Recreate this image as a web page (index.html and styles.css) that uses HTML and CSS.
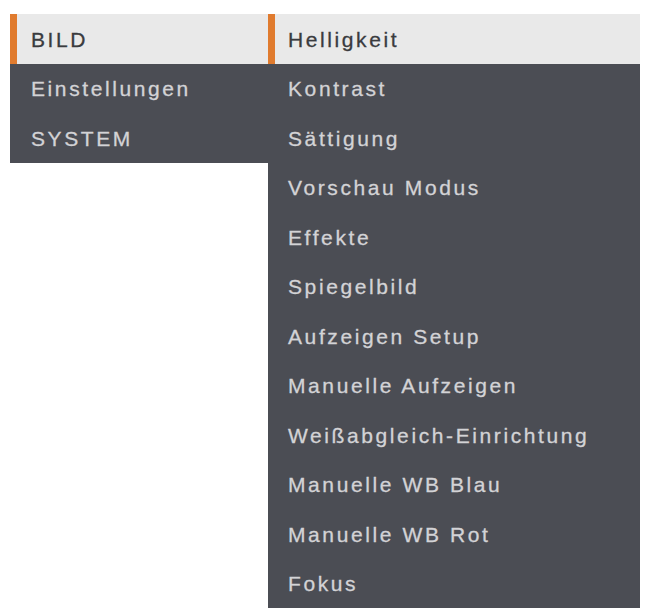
FILE: index.html
```html
<!DOCTYPE html>
<html lang="de">
<head>
<meta charset="utf-8">
<title>Menü</title>
<link rel="stylesheet" href="styles.css">
</head>
<body>
<div class="menus">
  <ul class="menu menu-main">
    <li class="item active">BILD</li>
    <li class="item">Einstellungen</li>
    <li class="item">SYSTEM</li>
  </ul>
  <ul class="menu menu-sub">
    <li class="item active">Helligkeit</li>
    <li class="item">Kontrast</li>
    <li class="item">Sättigung</li>
    <li class="item">Vorschau Modus</li>
    <li class="item">Effekte</li>
    <li class="item">Spiegelbild</li>
    <li class="item">Aufzeigen Setup</li>
    <li class="item">Manuelle Aufzeigen</li>
    <li class="item">Weißabgleich-Einrichtung</li>
    <li class="item">Manuelle WB Blau</li>
    <li class="item">Manuelle WB Rot</li>
    <li class="item">Fokus</li>
  </ul>
</div>
</body>
</html>
```
FILE: styles.css
```css
html, body {
  margin: 0;
  padding: 0;
  background: #ffffff;
}
body {
  font-family: "Liberation Sans", Arial, sans-serif;
}
.menus {
  display: flex;
  align-items: flex-start;
  padding: 14px 0 0 10px;
}
.menu {
  list-style: none;
  margin: 0;
  padding: 0;
  background: #4b4d54;
}
.menu-main {
  width: 258px;
}
.menu-sub {
  width: 372px;
}
.item {
  height: 49.5px;
  display: flex;
  align-items: center;
  padding-left: 21px;
  padding-top: 2px;
  font-size: 21px;
  letter-spacing: 2.6px;
  color: #d3d3d6;
  -webkit-text-stroke: 0.3px currentColor;
  box-sizing: border-box;
}
.menu-sub .item {
  padding-left: 20px;
}
.item.active {
  background: #e9e9e9;
  color: #3a3b3e;
  border-left: 7px solid #e07b2e;
  padding-left: 14px;
}
.menu-sub .item.active {
  padding-left: 13px;
}
```
